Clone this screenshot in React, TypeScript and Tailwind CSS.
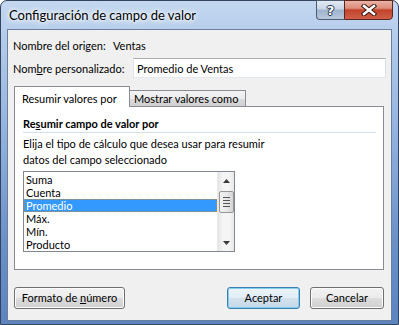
export default function App() {
  const items = ['Suma', 'Cuenta', 'Promedio', 'Máx.', 'Mín.', 'Producto']

  return (
    <div className="w-[399px] h-[325px] whitespace-nowrap bg-white font-['Segoe_UI',Lato,sans-serif] text-[11px] leading-[15px] text-black">
      {/* Window frame */}
      <div className="flex h-full w-full flex-col rounded-t-[7px] border border-[#33445c] bg-[linear-gradient(180deg,#c3d7f0_0%,#b3cbeb_12%,#8eaedb_45%,#6a90c8_75%,#5c84c0_100%)] px-[6px] pb-[3px]">
        {/* Title bar */}
        <div className="-mx-[6px] flex h-[28px] items-start">
          <div className="flex-1 pl-[8px] pt-[7px] text-[13px] [text-shadow:0_0_6px_#fff,0_0_10px_#fff,0_0_3px_#fff]">
            Configuración de campo de valor
          </div>
          <div className="-mt-px mr-[5px] flex">
            <div className="flex h-[20px] w-[28px] items-center justify-center rounded-bl-[4px] border border-r-0 border-[#4d5c72] bg-[linear-gradient(180deg,#e2eaf4_0%,#c9d6e7_45%,#9fb2cc_50%,#b7c8de_100%)]">
              <span className="font-['DejaVu_Sans',sans-serif] text-[13px] font-bold leading-none text-white [text-shadow:0_0_1px_#1c2a3c,1px_0_0_#2b3a50,-1px_0_0_#2b3a50,0_1px_0_#2b3a50,0_-1px_0_#2b3a50]">
                ?
              </span>
            </div>
            <div className="flex h-[20px] w-[49px] items-center justify-center rounded-br-[4px] border border-[#5a261e] bg-[linear-gradient(180deg,#eab3a6_0%,#dd8d7b_40%,#c2432b_50%,#cf6048_100%)]">
              <svg width="16" height="12" viewBox="0 0 16 12">
                <path d="M3 2 L13 10 M13 2 L3 10" stroke="#3d1810" strokeWidth="4.5" strokeLinecap="square" />
                <path d="M3 2 L13 10 M13 2 L3 10" stroke="#ffffff" strokeWidth="2.5" strokeLinecap="square" />
              </svg>
            </div>
          </div>
        </div>

        {/* Client area */}
        <div className="flex flex-1 flex-col border border-[#6c7f99] bg-[#f0f0f0]">
          <div className="mt-[8px] flex h-[15px] pl-[5px]">
            <span className="w-[100px] shrink-0">Nombre del origen:</span>
            <span>Ventas</span>
          </div>

          <div className="mt-[5px] flex items-center pl-[5px] pr-[5px]">
            <span>
              Nom<span className="underline">b</span>re personalizado:
            </span>
            <div className="ml-auto flex h-[20px] w-[253px] shrink-0 items-center border border-[#abadb3] border-l-[#e2e3ea] border-r-[#dbdfe6] border-b-[#e3e9ef] bg-white pl-[3px]">
              Promedio de Ventas
            </div>
          </div>

          {/* Tabs */}
          <div className="ml-[6px] mt-[8px] flex items-end">
            <div className="relative z-10 -mb-px flex h-[21px] w-[116px] items-start border border-b-0 border-[#898c95] bg-white pl-[7px] pt-[4px]">
              Resumir valores por
            </div>
            <div className="flex h-[16px] w-[116px] items-center border border-b-0 border-l-0 border-[#898c95] bg-[linear-gradient(180deg,#f3f3f3_0%,#ebebeb_50%,#dcdcdc_51%,#cfcfcf_100%)] pl-[4px]">
              Mostrar valores como
            </div>
          </div>

          <div className="ml-[6px] flex h-[164px] w-[370px] flex-col border border-[#898c95] bg-white pl-[8px] pr-[7px] pt-[9px]">
            <div className="font-bold">
              Re<span className="underline">s</span>umir campo de valor por
            </div>
            <div className="mt-[1px] h-px bg-[#d5dfe5]" />
            <div className="mt-[3px] leading-[16px]">
              Elija el tipo de cálculo que desea usar para resumir
              <br />
              datos del campo seleccionado
            </div>

            {/* Listbox */}
            <div className="mt-[3px] flex h-[81px] w-[212px] border border-[#828790] bg-white">
              <div className="flex flex-1 flex-col pt-px">
                {items.map((it) => (
                  <div
                    key={it}
                    className={`h-[13px] leading-[13px] ${
                      it === 'Promedio'
                        ? 'border border-dotted border-[#c08a40] bg-[#3399ff] pl-px text-white'
                        : 'pl-[2px]'
                    }`}
                  >
                    <span className={it === 'Promedio' ? '-mt-px block' : ''}>{it}</span>
                  </div>
                ))}
              </div>
              <div className="flex w-[17px] flex-col items-center border-l border-[#e9e9e9] bg-[linear-gradient(90deg,#e5e5e5_0%,#f5f5f5_30%,#f5f5f5_70%,#e8e8e8_100%)]">
                <div className="flex h-[17px] w-full items-center justify-center">
                  <svg width="7" height="4" viewBox="0 0 7 4">
                    <path d="M0 4 L3.5 0 L7 4 Z" fill="#3a3a3a" />
                  </svg>
                </div>
                <div className="mt-[2px] flex h-[22px] w-[15px] flex-col items-center justify-center gap-[2px] rounded-[2px] border border-[#969696] bg-[linear-gradient(90deg,#f2f2f2_0%,#e8e8e8_50%,#d5d5d5_100%)]">
                  <div className="h-px w-[7px] bg-[#555]" />
                  <div className="h-px w-[7px] bg-[#555]" />
                  <div className="h-px w-[7px] bg-[#555]" />
                  <div className="h-px w-[7px] bg-[#555]" />
                </div>
                <div className="flex-1" />
                <div className="flex h-[17px] w-full items-center justify-center">
                  <svg width="7" height="4" viewBox="0 0 7 4">
                    <path d="M0 0 L7 0 L3.5 4 Z" fill="#3a3a3a" />
                  </svg>
                </div>
              </div>
            </div>
          </div>

          {/* Buttons */}
          <div className="mt-[17px] flex pl-[6px] pr-[7px]">
            <button className="h-[22px] w-[111px] rounded-[3px] border border-[#707070] bg-[linear-gradient(180deg,#f2f2f2_0%,#ebebeb_50%,#dddddd_51%,#cfcfcf_100%)] leading-[20px] shadow-[inset_0_0_0_1px_#fcfcfc]">
              Formato de <span className="underline">n</span>úmero
            </button>
            <button className="ml-auto h-[22px] w-[73px] rounded-[3px] border border-[#3c7fb1] bg-[linear-gradient(180deg,#edf4fa_0%,#e2edf6_50%,#d3e2ee_51%,#c6d8e7_100%)] leading-[20px] shadow-[inset_0_0_0_1px_#7fd0f0]">
              Aceptar
            </button>
            <button className="ml-[10px] h-[22px] w-[74px] rounded-[3px] border border-[#707070] bg-[linear-gradient(180deg,#f2f2f2_0%,#ebebeb_50%,#dddddd_51%,#cfcfcf_100%)] leading-[20px] shadow-[inset_0_0_0_1px_#fcfcfc]">
              Cancelar
            </button>
          </div>
        </div>
      </div>
    </div>
  )
}
